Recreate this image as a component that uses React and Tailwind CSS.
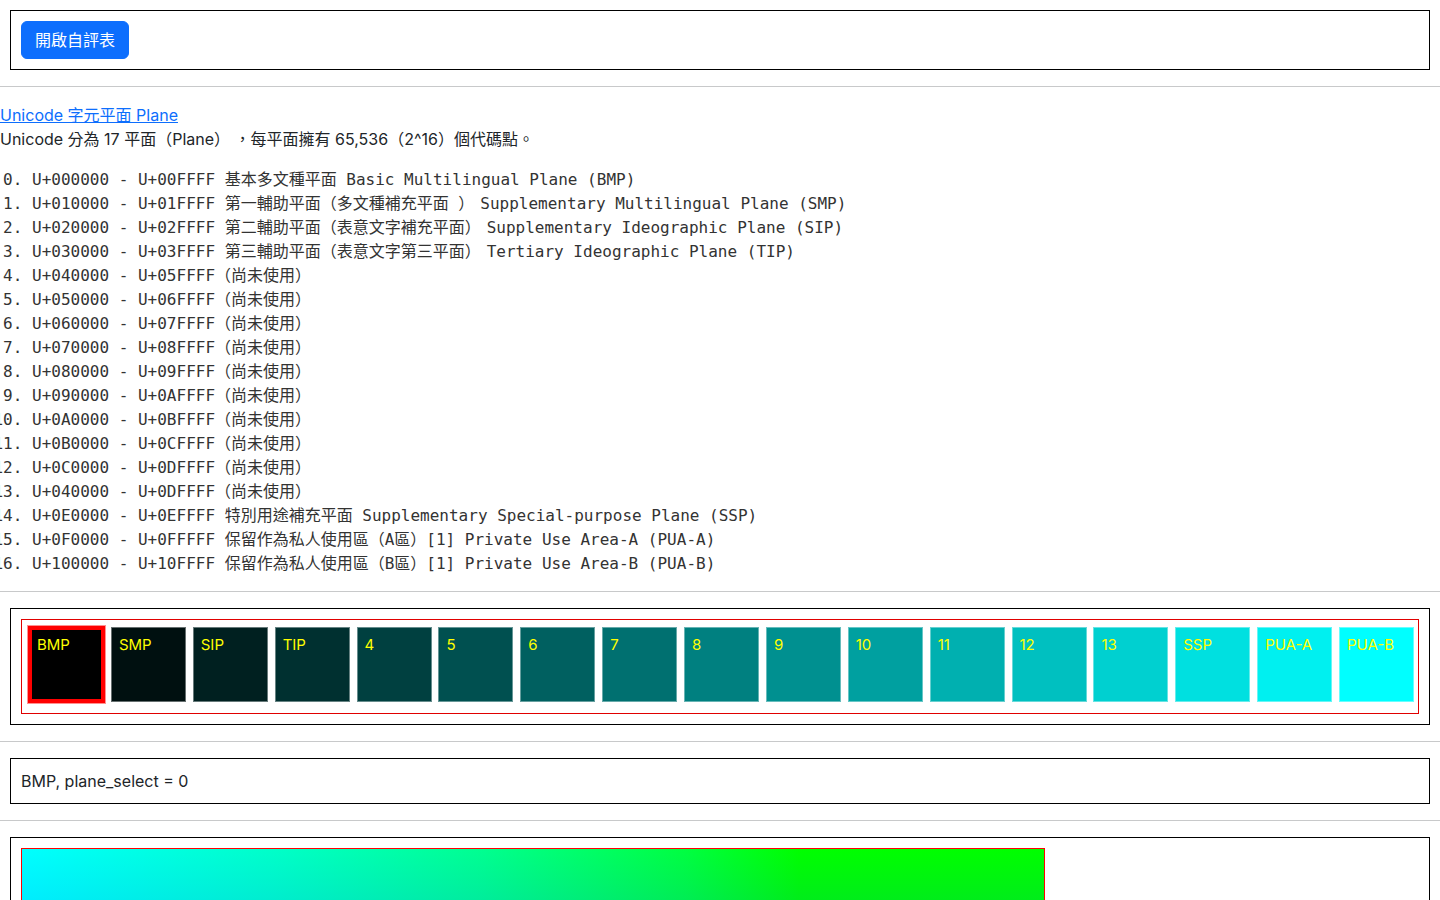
import React from "react";

const lines = [
  ["U+000000 - U+00FFFF 基本多文種平面 Basic Multilingual Plane (BMP)"],
  ["U+010000 - U+01FFFF 第一輔助平面（多文種補充平面 ）", "Supplementary Multilingual Plane (SMP)"],
  ["U+020000 - U+02FFFF 第二輔助平面（表意文字補充平面）", "Supplementary Ideographic Plane (SIP)"],
  ["U+030000 - U+03FFFF 第三輔助平面（表意文字第三平面）", "Tertiary Ideographic Plane (TIP)"],
  ["U+040000 - U+05FFFF（尚未使用）"],
  ["U+050000 - U+06FFFF（尚未使用）"],
  ["U+060000 - U+07FFFF（尚未使用）"],
  ["U+070000 - U+08FFFF（尚未使用）"],
  ["U+080000 - U+09FFFF（尚未使用）"],
  ["U+090000 - U+0AFFFF（尚未使用）"],
  ["U+0A0000 - U+0BFFFF（尚未使用）"],
  ["U+0B0000 - U+0CFFFF（尚未使用）"],
  ["U+0C0000 - U+0DFFFF（尚未使用）"],
  ["U+040000 - U+0DFFFF（尚未使用）"],
  ["U+0E0000 - U+0EFFFF 特別用途補充平面 Supplementary Special-purpose Plane (SSP)"],
  ["U+0F0000 - U+0FFFFF 保留作為私人使用區（A區）[1] Private Use Area-A (PUA-A)"],
  ["U+100000 - U+10FFFF 保留作為私人使用區（B區）[1] Private Use Area-B (PUA-B)"],
];

const labels = [
  "BMP", "SMP", "SIP", "TIP", "4", "5", "6", "7", "8", "9", "10", "11", "12", "13", "SSP", "PUA-A", "PUA-B",
];

function Hr() {
  return <hr className="my-4 border-0 border-t border-[#c8c9ca]" />;
}

export default function App() {
  return (
    <div className="font-['Inter','Noto_Sans_CJK_TC',sans-serif] text-[16px] leading-6 text-[#212529] bg-white min-h-[900px] pb-4">
      <div className="mx-[10px] mt-[10px] mb-[10px] border border-black p-[10px]">
        <button className="bg-[#0d6efd] border border-[#0d6efd] text-white rounded-[6px] px-[13px] py-[6px] text-[16px] leading-6">
          開啟自評表
        </button>
      </div>
      <Hr />
      <div>
        <a href="#" className="text-[#0d6efd] underline">
          Unicode 字元平面 Plane
        </a>
      </div>
      <p className="mb-4">Unicode 分為 17 平面（Plane） ，每平面擁有 65,536（2^16）個代碼點。</p>
      <ol
        start={0}
        className="list-decimal pl-8 pt-[1px] -mb-[1px] font-['DejaVu_Sans_Mono','Noto_Sans_CJK_TC',monospace] text-[16px] leading-6 text-[#333]"
      >
        {lines.map((l, i) => (
          <li key={i} className="whitespace-pre">
            {l[0]}
            {l[1] ? <span className="ml-[6px]">{l[1]}</span> : null}
          </li>
        ))}
      </ol>
      <Hr />
      <div className="mx-[10px] border border-black p-[10px]">
        <div className="border border-[#e00000] flex justify-between pl-[7px] pr-[4px] pt-[7px] pb-[11px]">
          {labels.map((lab, i) => {
            const v = Math.min(255, i * 16);
            if (i === 0) {
              return (
                <div
                  key={i}
                  className="w-[79px] h-[79px] -m-[2px] shrink-0 border border-[#ff9090] bg-[#ff0000] p-[4px]"
                >
                  <div className="w-full h-full bg-black pl-[5px] pt-[4px] text-[15px] leading-[22px] text-[#ffff00]">
                    {lab}
                  </div>
                </div>
              );
            }
            return (
              <div
                key={i}
                className="w-[75px] h-[75px] shrink-0 border border-white/40 pl-[7px] pt-[6px] text-[15px] leading-[22px] text-[#ffff00]"
                style={{ backgroundColor: `rgb(0, ${v}, ${v})` }}
              >
                {lab}
              </div>
            );
          })}
        </div>
      </div>
      <Hr />
      <div className="mx-[10px] border border-black p-[10px]">BMP, plane_select = 0</div>
      <Hr />
      <div className="mx-[10px] border border-black p-[10px]">
        <div className="w-[1024px] h-[300px] border border-[#ff0000] bg-[linear-gradient(to_bottom,rgba(0,80,255,0)_0px,rgba(0,80,255,0.12)_60px,rgba(0,80,255,0.3)_300px),linear-gradient(to_right,#00ffff_0%,#00ffc8_25%,#00ff90_45%,#00ff40_65%,#00ff00_76%,#00ff00_100%)]" />
      </div>
    </div>
  );
}
